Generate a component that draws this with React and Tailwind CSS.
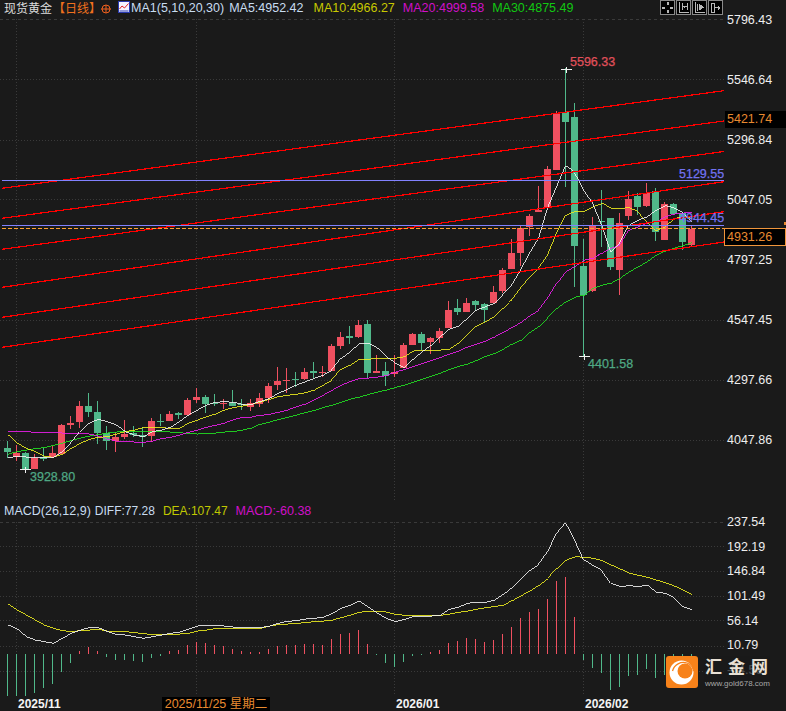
// App.jsx
// Gold daily candlestick chart with MA lines, channel lines and MACD panel

const UP = '#ef5060';
const DOWN = '#50b88a';

// [high, bodyTop, bodyBottom, low, colour] in pixels, read off the chart
const CANDLES = [
  [441, 448, 452, 458, 'g'], [445, 453.3, 456.7, 461, 'r'], [451.7, 453.3, 469, 470, 'g'], [454, 458, 469, 469, 'r'],
  [447.7, 457.3, 458.7, 461, 'g'], [445.7, 453.3, 457.3, 457.7, 'r'], [424, 425, 454, 454, 'r'], [416, 423, 424.7, 428.7, 'r'],
  [401.3, 406, 422, 428, 'r'], [393.3, 406, 412, 416.7, 'g'], [401.3, 412, 433.3, 444, 'g'], [426, 433.3, 440.7, 450, 'g'],
  [431.7, 437, 441.3, 452, 'r'], [420, 434, 437, 439, 'r'], [426, 432.7, 435.3, 436.7, 'g'], [427.3, 435, 436.7, 446.7, 'g'],
  [417.7, 421, 435.7, 441.7, 'r'], [414, 420.7, 421.3, 426, 'g'], [410.7, 414, 421, 421, 'r'], [411.7, 412.7, 414.7, 419.3, 'g'],
  [398.3, 400, 415, 415, 'r'], [388.3, 397.3, 400, 403.3, 'r'], [395, 397.3, 404, 412.7, 'g'], [394, 403.3, 404.3, 406, 'g'],
  [399.3, 403.3, 404, 409.3, 'r'], [390, 402.7, 405.7, 406, 'g'], [399, 404, 404.7, 410, 'g'], [399, 403.3, 406.7, 410.7, 'r'],
  [393.3, 398.3, 404, 407.3, 'r'], [383.3, 386, 397.7, 402.7, 'r'], [367.3, 381, 385, 390, 'r'], [368.3, 380, 380.7, 392.7, 'r'],
  [372.3, 379, 379.7, 386.7, 'g'], [368.3, 372.3, 379.3, 380, 'r'], [362.3, 371, 372.7, 378.3, 'g'], [366, 372, 373.3, 377.3, 'r'],
  [344, 346, 371, 371, 'r'], [332.3, 337, 346, 349, 'r'], [326, 336, 338, 344, 'g'], [320, 325, 337, 337.7, 'r'],
  [320, 324, 372.7, 378.3, 'g'], [355, 371, 372.7, 373.3, 'r'], [362.3, 371, 376, 386, 'g'], [355, 372, 374, 377.3, 'r'],
  [343.3, 345, 367.7, 368.3, 'r'], [332.7, 334.3, 345, 345, 'r'], [332.3, 334, 342.7, 350, 'g'], [336.7, 338, 342, 354, 'r'],
  [327.7, 331, 338, 342.7, 'r'], [301, 310, 328.3, 328.3, 'r'], [299.3, 308.3, 312, 315, 'g'], [298.3, 303, 312, 312, 'r'],
  [300, 301, 305, 310.7, 'g'], [303.3, 304.3, 310, 322.3, 'g'], [286, 292, 302.7, 303.3, 'r'], [268.3, 270, 290.7, 293.3, 'r'],
  [239, 253.3, 269, 269.3, 'r'], [226, 228.3, 252.7, 265.7, 'r'], [214, 216, 226.7, 236, 'r'], [185.7, 210, 212, 212, 'r'],
  [166, 169, 208.3, 208.3, 'r'], [111, 113.3, 170, 170, 'r'], [68, 111.7, 121.7, 186.7, 'g'], [102.7, 117.3, 245.7, 286.7, 'g'],
  [239.3, 266, 295, 356.7, 'g'], [216.7, 226, 290.7, 291.7, 'r'], [190, 221.3, 222, 246.7, 'g'], [218, 218, 266.7, 270, 'g'],
  [213.3, 222.7, 270, 295, 'r'], [191, 199.3, 216, 220, 'r'], [193.3, 196, 206.7, 215, 'g'], [183.3, 193.3, 205.7, 206.7, 'r'],
  [188.3, 190.7, 231.7, 241, 'g'], [201.7, 204, 240, 240, 'r'], [203, 204, 214, 215, 'g'], [212.3, 213.3, 241.7, 250, 'g'],
  [225, 228.7, 245.3, 246.7, 'r'],
];

const MA5 = [
  457.3, 456.7, 457, 457, 457, 457.3, 451.7, 443, 431.7, 423, 419.3, 421.7, 425, 431.7, 435, 436.7, 431.7, 430, 427.3, 421.7,
  415, 410, 405, 402.3, 401.7, 402.3, 404.3, 404.3, 401.7, 398.3, 393.3, 389.3, 385, 381.7, 378.3, 375, 370, 358.3, 351.7, 343.3,
  343.3, 348, 356.7, 363, 367.7, 359, 351.7, 345, 336.7, 329, 326, 318.3, 310, 306.7, 303.3, 295, 285, 270, 253.3, 238.3,
  208, 186.7, 166, 172.7, 190, 203, 225, 251.7, 243, 225, 220, 216.7, 210, 205.7, 208, 213, 222,
];
const MA10 = [
  435, 443.3, 448.3, 451.7, 456, 457.3, 454, 448.3, 443.3, 439.3, 437.3, 436.7, 434, 431.7, 430, 427.7, 427.7, 427.7, 428.3, 428.3,
  423.3, 420, 416.7, 414, 410, 407.7, 406, 404.3, 402, 399.3, 396.7, 395.3, 394.3, 392.7, 390, 385, 380, 369, 365, 359.3,
  359.3, 358.3, 358.3, 358.3, 356.7, 351, 350.7, 350.7, 350, 349.3, 343, 335, 326, 321.7, 316.7, 308, 300, 288, 277, 268,
  255, 233, 215, 211.3, 211, 206.7, 203.3, 208.3, 208.3, 207.7, 211.7, 221.7, 230.7, 226.7, 218.3, 217, 218.5,
];
const MA20 = [
  431.7, 431.7, 431.7, 432.3, 432.3, 432.7, 433, 433.3, 433.7, 434, 436, 439, 441, 441.7, 442, 442.3, 441, 438.7, 437.3, 435,
  432.3, 430, 427.3, 425.3, 423, 419.7, 417.3, 417, 415.5, 414.3, 412.3, 410, 406.7, 404, 399.5, 395, 390, 385, 381.5, 378.5,
  378, 377, 375.5, 372, 369.5, 366.5, 363.5, 360.5, 357.5, 354, 351, 347, 344, 341, 337, 332, 327.5, 322, 315.5, 310,
  298, 283, 271.5, 266, 260, 258, 253, 248, 245, 230, 226.7, 223, 221.7, 216.7, 214, 213, 212.7,
];
const MA30 = [
  454, 451.7, 450, 448.7, 447.5, 445.5, 443, 440.5, 438, 436, 434.5, 433, 432, 431.5, 431.3, 431.3, 431.3, 431.5, 432, 432.5,
  433.7, 434, 433.5, 433, 432, 431.5, 430, 428, 424.5, 422, 419.5, 417.5, 415, 412.5, 410.5, 407.5, 405, 402, 399, 397,
  394.5, 392, 390, 387.5, 385, 382, 379, 376, 373, 369.5, 366.5, 364, 360.5, 356.5, 353.5, 349, 344, 340, 332, 326,
  318, 308, 301.5, 297, 295, 288, 285, 283, 278, 271.7, 266.7, 261.7, 255, 251, 248, 245.7, 242.3,
];

// Channel lines: left y at x=2, right y at x=724
const CHANNEL = [[188.3, 90.7], [218.3, 121], [249.3, 151.5], [287.3, 181.7], [317.3, 211.7], [347.3, 242]];

// MACD values below are the y of the 3x crop, so y = 500 + v / 3
const DIFF = [
  375, 387, 410, 420, 425, 430, 415, 400, 390, 383, 383, 395, 403, 405, 410, 415, 410, 405, 400, 397, 387, 378, 376, 376, 378, 381,
  383, 383, 383, 378, 370, 364, 362, 357, 355, 352, 340, 325, 315, 303, 322, 340, 355, 365, 358, 350, 348, 348, 345, 328, 322, 310,
  307, 307, 300, 282, 265, 238, 210, 192, 155, 100, 68, 120, 180, 197, 212, 250, 260, 257, 260, 255, 277, 280, 293, 320, 330,
];
const DEA = [
  313, 330, 345, 360, 375, 385, 392, 395, 392, 390, 388, 393, 395, 395, 398, 401, 404, 404, 403, 402, 400, 393, 390, 386, 385, 385,
  385, 385, 385, 378, 374, 372, 370, 368, 365, 363, 360, 353, 345, 337, 333, 333, 336, 343, 346, 347, 347, 346, 346, 342, 337, 333,
  328, 323, 320, 315, 302, 287, 272, 255, 235, 205, 180, 170, 172, 175, 182, 195, 207, 220, 226, 232, 240, 248, 258, 270, 285,
];
const BARS = [
  587, 587, 587, 578, 565, 552, 515, 488, 452, 440, 452, 472, 480, 480, 483, 485, 474, 468, 452, 449, 434, 426, 429, 434, 438, 446,
  452, 456, 456, 446, 438, 434, 434, 431, 431, 434, 417, 402, 399, 390, 431, 465, 488, 500, 486, 467, 464, 457, 450, 429, 423, 414,
  417, 426, 420, 402, 381, 354, 336, 327, 297, 243, 231, 351, 480, 504, 519, 570, 561, 528, 525, 507, 534, 525, 520, 520, 520,
];

const PRICE_LABELS = ['5796.43', '5546.64', '5296.84', '5047.05', '4797.25', '4547.45', '4297.66', '4047.86'];
const MACD_LABELS = ['237.54', '192.19', '146.84', '101.49', '56.14', '10.79', '-34.56'];
const GRID_X = [16.5, 196.5, 394.5, 583.5];

const toPoints = (ys) => ys.map((y, i) => `${7.5 + 9 * i},${y}`).join(' ');
const toMacdPoints = (vs) => toPoints(vs.map((v) => 500 + v / 3));

function Candle({ data, i }) {
  const [high, top, bottom, low, kind] = data;
  const fill = kind === 'r' ? UP : DOWN;
  return (
    <g fill={fill}>
      <rect x={7 + 9 * i} y={high} width="1" height={low - high} />
      <rect x={4 + 9 * i} y={top} width="7" height={Math.max(bottom - top, 1)} />
    </g>
  );
}

function Tick({ x, y }) {
  return <path d={`M${x - 5} ${y}H${x + 6}M${x + 0.5} ${y - 3}V${y + 3}`} stroke="#f0f0f0" fill="none" />;
}

function GridLines({ rows, top, bottom }) {
  return (
    <g stroke="#3a3a3a" fill="none" strokeDasharray="1 2">
      {rows.map((y) => (
        <line key={y} x1="0" x2="724" y1={y} y2={y} />
      ))}
      {GRID_X.map((x) => (
        <line key={x} x1={x} x2={x} y1={top} y2={bottom} />
      ))}
    </g>
  );
}

function PlotLabel({ x, y, color, children }) {
  return (
    <text x={x} y={y} fill={color} stroke={color} strokeWidth="0.25">
      {children}
    </text>
  );
}

function MainChart() {
  return (
    <svg width="724" height="481" viewBox="0 19 724 481" shapeRendering="crispEdges" className="block">
      <GridLines rows={[79.5, 140.5, 199.5, 259.5, 320.5, 380.5, 440.5]} top={19} bottom={500} />
      <line x1="0" x2="724" y1="19.5" y2="19.5" stroke="#3a3a3a" strokeDasharray="3 3" />
      {CANDLES.map((c, i) => (
        <Candle key={i} data={c} i={i} />
      ))}
      <g fill="none" strokeWidth="0.85">
        <polyline points={toPoints(MA30)} stroke="#22e622" />
        <polyline points={toPoints(MA20)} stroke="#f01ff0" />
        <polyline points={toPoints(MA10)} stroke="#f0f01e" />
        <polyline points={toPoints(MA5)} stroke="#f5f5f5" />
      </g>
      {CHANNEL.map(([a, b]) => (
        <line key={a} x1="2" y1={a} x2="724" y2={b} stroke="#ff0000" strokeWidth="1.2" />
      ))}
      <line x1="2" x2="724" y1="180.5" y2="180.5" stroke="#8282ff" />
      <line x1="2" x2="724" y1="225.5" y2="225.5" stroke="#8282ff" />
      <line x1="2" x2="724" y1="228.5" y2="228.5" stroke="#ffa032" strokeDasharray="4 2" />
      <Tick x={566} y={69.5} />
      <Tick x={584} y={356.5} />
      <Tick x={25} y={469.5} />
      <g fontSize="12.5">
        <PlotLabel x={570} y={66} color="#e0505a">5596.33</PlotLabel>
        <PlotLabel x={588} y={368} color="#4fa884">4401.58</PlotLabel>
        <PlotLabel x={30} y={481} color="#4fa884">3928.80</PlotLabel>
        <PlotLabel x={679} y={178} color="#7272f0">5129.55</PlotLabel>
        <PlotLabel x={679} y={222} color="#7272f0">4944.45</PlotLabel>
      </g>
    </svg>
  );
}

function MacdChart() {
  return (
    <svg width="724" height="176" viewBox="0 521 724 176" shapeRendering="crispEdges" className="block">
      <GridLines rows={[546.5, 571.5, 596.5, 620.5, 646.5, 671.5]} top={522} bottom={696} />
      <line x1="0" x2="724" y1="522.5" y2="522.5" stroke="#3a3a3a" strokeDasharray="3 3" />
      {BARS.map((v, i) => {
        const y = 500 + v / 3;
        const zero = 653.5;
        return (
          <rect
            key={i}
            x={7 + 9 * i}
            y={Math.min(y, zero)}
            width="1"
            height={Math.abs(y - zero)}
            fill={y < zero ? UP : DOWN}
          />
        );
      })}
      <g fill="none" strokeWidth="0.85">
        <polyline points={toMacdPoints(DEA)} stroke="#f0f01e" />
        <polyline points={toMacdPoints(DIFF)} stroke="#f5f5f5" />
      </g>
    </svg>
  );
}

function ToolButton({ children }) {
  return (
    <div className="w-[15px] h-[15px] bg-black border border-[#8a8a8a]">
      <svg width="13" height="13" viewBox="0 0 13 13" fill="none" stroke="#b8b8b8" shapeRendering="crispEdges">
        {children}
      </svg>
    </div>
  );
}

function Toolbar() {
  return (
    <div className="ml-auto mr-px flex items-start gap-px self-start">
      <ToolButton>
        <path d="M1 6.5H4M9 6.5H12M6.5 1V4M6.5 9V12" strokeWidth="2" />
      </ToolButton>
      <ToolButton>
        <path d="M2.5 1V11.5H12M5.5 2V9M10.5 2V9M6 5.5H10M7 4.5V6.5" />
      </ToolButton>
      <ToolButton>
        <path d="M2.5 1V11.5H12M4.5 2.5V9.5M6 3V9M7 3.5V8.5M8 4V8M9 5V7M10 5.5V6.5" />
      </ToolButton>
      <ToolButton>
        <path d="M2 2.5V11H5V2.5ZM6 6.5H11M9 4.5V8.5M10 5.5V7.5" />
      </ToolButton>
    </div>
  );
}

function Logo() {
  return (
    <div className="absolute left-[666px] top-[656px] flex items-start">
      <svg width="32" height="32" viewBox="0 0 32 32" className="block">
        <rect width="32" height="32" rx="3" fill="#f7821a" />
        <circle cx="15.5" cy="16.5" r="12" fill="#fff" />
        <circle cx="19" cy="15" r="7.5" fill="#f7821a" />
        <path d="M6.5 15C8 8.5 15 5 21 7C24.5 8.2 27 11 27.5 15" fill="none" stroke="#f7821a" strokeWidth="1.3" />
      </svg>
      <div className="ml-[6px] pl-px w-[66px] h-[32px] flex flex-col bg-[#1a1a1a]/75">
        <div className="h-[24px] text-[17px] leading-[24px] font-bold tracking-[6px] whitespace-nowrap text-[#e8e0d4]">汇金网</div>
        <div className="text-[8px] leading-[8px] whitespace-nowrap text-[#a8a8a8]">www.gold678.com</div>
      </div>
    </div>
  );
}

export default function App() {
  return (
    <div className="relative w-[786px] h-[711px] overflow-hidden bg-[#1a1a1a] text-[12.5px] font-['Liberation_Sans','Noto_Sans_CJK_SC',sans-serif]">
      {/* Candles */}
      <div className="flex h-[500px]">
        <div className="w-[724px] flex flex-col">
          <div className="h-[19px] pb-[2px] flex items-center whitespace-nowrap">
            <span className="ml-[4px] text-xs text-[#dcdcdc]">现货黄金</span>
            <span className="ml-px text-xs text-[#f0701e]">【日线】</span>
            <svg width="10" height="10" viewBox="0 0 10 10" fill="none" stroke="#f0601e">
              <circle cx="5" cy="5" r="4" />
              <path d="M0 5H10M5 1V9" />
            </svg>
            <svg width="12" height="12" viewBox="0 0 12 12" className="ml-[7px] mb-[3px]">
              <rect x="0.5" y="0.5" width="11" height="11" fill="#f4f4ff" stroke="#2a3ab0" />
              <path d="M1.5 8L4 5L6.5 7L10.5 2.5" fill="none" stroke="#e02020" />
              <path d="M1.5 10H10.5" fill="none" stroke="#2a3ab0" />
            </svg>
            <span className="ml-[1px] text-[#c8dcf0]">MA1(5,10,20,30)</span>
            <span className="ml-[5px] text-[#c8dcf0]">MA5:4952.42</span>
            <span className="ml-[10px] text-[#c8c800]">MA10:4966.27</span>
            <span className="ml-[8px] text-[#d010c8]">MA20:4999.58</span>
            <span className="ml-[8px] text-[#12c812]">MA30:4875.49</span>
            <Toolbar />
          </div>
          <MainChart />
        </div>
        <div className="w-[62px] pt-[13px] pl-[3px] flex flex-col gap-[45px] text-[#eeeeee]">
          {PRICE_LABELS.map((p) => (
            <div key={p} className="h-[15px] leading-[15px]">{p}</div>
          ))}
        </div>
      </div>

      {/* Level tags sitting over the price axis */}
      <div className="absolute left-[784px] top-[222px] w-[2px] h-[3px] bg-[#e88a30]" />
      <div className="absolute left-[725px] top-[111px] w-[61px] h-[17px] bg-black pl-[2px] leading-[17px] text-[#e88a30]">5421.74</div>
      <div className="absolute left-[724px] top-[228px] w-[62px] h-[18px] bg-black border border-[#f0963c] pl-[2px] leading-[16px] text-[#e88a30]">4931.26</div>

      {/* MACD */}
      <div className="flex h-[197px]">
        <div className="w-[724px] flex flex-col">
          <div className="h-[21px] pt-px flex items-center whitespace-nowrap">
            <span className="ml-[4px] text-[#c8dcf0]">MACD(26,12,9)</span>
            <span className="ml-[4px] text-xs text-[#c8dcf0]">DIFF:77.28</span>
            <span className="ml-[8px] text-xs text-[#c0c800]">DEA:107.47</span>
            <span className="ml-[8px] text-[#d010c8]">MACD:-60.38</span>
          </div>
          <MacdChart />
        </div>
        <div className="w-[62px] pt-[15px] pl-[3px] flex flex-col gap-[9.7px] text-[#eeeeee]">
          {MACD_LABELS.map((p) => (
            <div key={p} className="h-[15px] leading-[15px]">{p}</div>
          ))}
        </div>
      </div>

      {/* Date axis */}
      <div className="h-[14px] flex items-center whitespace-nowrap text-xs">
        <div className="w-[162px] pl-[18px] font-bold text-[#f4f4f4]">2025/11</div>
        <div className="w-[108px] h-[14px] bg-black text-center leading-[14px] text-[12.5px] text-[#e88a30]">2025/11/25 星期二</div>
        <div className="ml-[126px] w-[189px] font-bold text-[#f4f4f4]">2026/01</div>
        <div className="font-bold text-[#f4f4f4]">2026/02</div>
      </div>

      <Logo />
    </div>
  );
}
